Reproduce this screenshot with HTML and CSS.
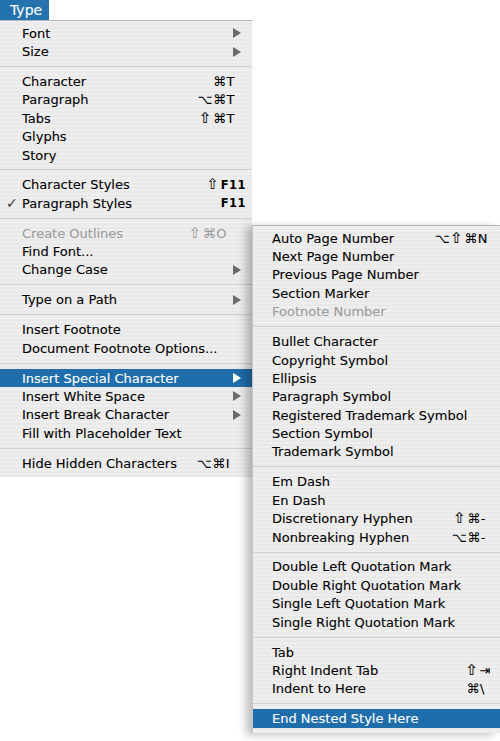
FILE: index.html
```html
<!DOCTYPE html>
<html>
<head>
<meta charset="utf-8">
<link rel="stylesheet" href="styles.css">
</head>
<body>
<div class="screen">
  <div class="title">Type</div>
  <div class="menu main">
    <div class="item"><span class="label">Font</span><span class="arrow"></span></div>
    <div class="item"><span class="label">Size</span><span class="arrow"></span></div>
    <div class="sep"></div>
    <div class="item"><span class="label">Character</span><span class="sc">⌘T</span></div>
    <div class="item"><span class="label">Paragraph</span><span class="sc">⌥⌘T</span></div>
    <div class="item"><span class="label">Tabs</span><span class="sc"><span class="shift">⇧</span>⌘T</span></div>
    <div class="item"><span class="label">Glyphs</span></div>
    <div class="item"><span class="label">Story</span></div>
    <div class="sep"></div>
    <div class="item"><span class="label">Character Styles</span><span class="sc f"><span class="shift">⇧</span>F11</span></div>
    <div class="item"><span class="check">✓</span><span class="label">Paragraph Styles</span><span class="sc f">F11</span></div>
    <div class="sep"></div>
    <div class="item disabled"><span class="label">Create Outlines</span><span class="sc o"><span class="shift">⇧</span>⌘O</span></div>
    <div class="item"><span class="label">Find Font...</span></div>
    <div class="item"><span class="label">Change Case</span><span class="arrow"></span></div>
    <div class="sep"></div>
    <div class="item"><span class="label">Type on a Path</span><span class="arrow"></span></div>
    <div class="sep"></div>
    <div class="item"><span class="label">Insert Footnote</span></div>
    <div class="item"><span class="label">Document Footnote Options...</span></div>
    <div class="sep"></div>
    <div class="item active"><span class="label">Insert Special Character</span><span class="arrow"></span></div>
    <div class="item"><span class="label">Insert White Space</span><span class="arrow"></span></div>
    <div class="item"><span class="label">Insert Break Character</span><span class="arrow"></span></div>
    <div class="item"><span class="label">Fill with Placeholder Text</span></div>
    <div class="sep"></div>
    <div class="item"><span class="label">Hide Hidden Characters</span><span class="sc i">⌥⌘I</span></div>
  </div>
  <div class="menu sub">
    <div class="item"><span class="label">Auto Page Number</span><span class="sc">⌥<span class="shift">⇧</span>⌘N</span></div>
    <div class="item"><span class="label">Next Page Number</span></div>
    <div class="item"><span class="label">Previous Page Number</span></div>
    <div class="item"><span class="label">Section Marker</span></div>
    <div class="item disabled"><span class="label">Footnote Number</span></div>
    <div class="sep"></div>
    <div class="item"><span class="label">Bullet Character</span></div>
    <div class="item"><span class="label">Copyright Symbol</span></div>
    <div class="item"><span class="label">Ellipsis</span></div>
    <div class="item"><span class="label">Paragraph Symbol</span></div>
    <div class="item"><span class="label">Registered Trademark Symbol</span></div>
    <div class="item"><span class="label">Section Symbol</span></div>
    <div class="item"><span class="label">Trademark Symbol</span></div>
    <div class="sep"></div>
    <div class="item"><span class="label">Em Dash</span></div>
    <div class="item"><span class="label">En Dash</span></div>
    <div class="item"><span class="label">Discretionary Hyphen</span><span class="sc dash"><span class="shift">⇧</span>⌘-</span></div>
    <div class="item"><span class="label">Nonbreaking Hyphen</span><span class="sc dash">⌥⌘-</span></div>
    <div class="sep"></div>
    <div class="item"><span class="label">Double Left Quotation Mark</span></div>
    <div class="item"><span class="label">Double Right Quotation Mark</span></div>
    <div class="item"><span class="label">Single Left Quotation Mark</span></div>
    <div class="item"><span class="label">Single Right Quotation Mark</span></div>
    <div class="sep"></div>
    <div class="item"><span class="label">Tab</span></div>
    <div class="item"><span class="label">Right Indent Tab</span><span class="sc tab"><span class="shift">⇧</span>⇥</span></div>
    <div class="item"><span class="label">Indent to Here</span><span class="sc bs">⌘\</span></div>
    <div class="sep"></div>
    <div class="item active"><span class="label">End Nested Style Here</span></div>
  </div>
</div>
</body>
</html>
```
FILE: styles.css
```css
html, body {
  margin: 0;
  padding: 0;
  background: #ffffff;
  overflow: hidden;
}

.screen {
  position: relative;
  width: 500px;
  height: 741px;
  font-family: "DejaVu Sans", "Liberation Sans", sans-serif;
  font-size: 13px;
  color: #000;
  -webkit-text-stroke: 0.1px currentColor;
}

.title {
  width: 39px;
  height: 20px;
  line-height: 20px;
  padding-left: 10px;
  background: #2472ae;
  color: #fff;
  font-size: 14px;
}

.menu {
  background: repeating-linear-gradient(to bottom, #eeeeee 0, #eeeeee 2px, #e9e9e9 2px, #e9e9e9 4px);
  padding: 3px 0 5px;
  border-top: 1px solid #b4b4b4;
}

.main {
  width: 252px;
  box-sizing: border-box;
}

.sub {
  position: absolute;
  left: 252px;
  top: 225px;
  width: 248px;
  box-sizing: border-box;
  box-shadow: -6px 2px 8px rgba(0, 0, 0, 0.25);
  border-left: 1px solid #c4c4c4;
}

.item {
  display: flex;
  align-items: center;
  height: 18.4px;
  padding-left: 22px;
  white-space: nowrap;
}

.sub .item {
  padding-left: 19px;
}

.label {
  flex: 1;
}

.check {
  width: 16px;
  margin-left: -16px;
  font-size: 14px;
  color: #444;
}

.disabled {
  color: #9c9c9c;
}

.active {
  background: #1f6dab;
  color: #fff;
}

.sep {
  height: 11.5px;
  display: flex;
  align-items: center;
}

.sep::before {
  content: "";
  flex: 1;
  border-top: 1px solid #cfcfcf;
}

.sc {
  margin-right: 17px;
  letter-spacing: 0.5px;
}

.shift {
  font-size: 15px;
  line-height: 1;
  font-weight: normal;
  margin-right: 1px;
}

.sc.f {
  margin-right: 6px;
  font-weight: bold;
  font-size: 11.5px;
  -webkit-text-stroke: 0;
}

.sc.o {
  margin-right: 25px;
}

.sc.i {
  margin-right: 22px;
}

.sub .sc {
  margin-right: 12px;
}

.sub .sc.dash {
  margin-right: 14px;
}

.sub .sc.tab {
  margin-right: 9px;
}

.sub .sc.bs {
  margin-right: 15px;
}

.arrow {
  width: 0;
  height: 0;
  margin-right: 11px;
  border-left: 8px solid #6a6a6a;
  border-top: 5px solid transparent;
  border-bottom: 5px solid transparent;
}

.active .arrow {
  border-left-color: #fff;
}
```
